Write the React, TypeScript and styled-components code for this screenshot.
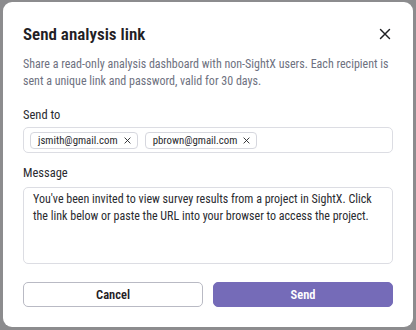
import React from "react";
import styled, { createGlobalStyle } from "styled-components";

const Global = createGlobalStyle`
  html, body { margin: 0; padding: 0; }
  body { background: #8c8c8e; font-family: "Roboto Condensed", "Roboto", sans-serif; }
  * { box-sizing: border-box; }
`;

const Backdrop = styled.div`
  width: 416px;
  height: 330px;
  padding: 2px 3px 3px 3px;
  background: #8c8c8e;
`;

const Modal = styled.div`
  height: 100%;
  background: #ffffff;
  border-radius: 9px;
  padding: 20px;
  display: flex;
  flex-direction: column;
`;

const Header = styled.div`
  display: flex;
  align-items: center;
  justify-content: space-between;
  height: 24px;
`;

const Title = styled.h1`
  margin: 0;
  font-size: 17px;
  font-weight: 600;
  color: #1f2024;
`;

const CloseButton = styled.button`
  border: none;
  background: none;
  padding: 0;
  width: 16px;
  height: 16px;
  display: flex;
  align-items: center;
  justify-content: center;
  cursor: pointer;
`;

const Description = styled.p`
  margin: 10px 0 0;
  font-size: 12px;
  line-height: 17px;
  color: #6e7180;
`;

const Label = styled.div<{ $top: number }>`
  font-size: 12.5px;
  color: #2a2b30;
  margin-top: ${(p) => p.$top}px;
  line-height: 16px;
`;

const TagBox = styled.div`
  margin-top: 4px;
  height: 26px;
  border: 1px solid #dcdde3;
  border-radius: 5px;
  display: flex;
  align-items: center;
  gap: 7px;
  padding: 0 6px;
`;

const Chip = styled.span`
  display: inline-flex;
  align-items: center;
  gap: 6px;
  height: 17px;
  padding: 0 6px 0 7px;
  border: 1px solid #d6d7de;
  border-radius: 4px;
  font-size: 10.8px;
  color: #2a2b30;
`;

const MessageBox = styled.div`
  margin-top: 6px;
  height: 77px;
  border: 1px solid #dcdde3;
  border-radius: 5px;
  padding: 3px 8px 3px 9px;
  font-size: 12px;
  line-height: 17px;
  color: #2a2b30;
`;

const Actions = styled.div`
  margin-top: auto;
  display: grid;
  grid-template-columns: 1fr 1fr;
  gap: 10px;
`;

const Button = styled.button<{ $primary?: boolean }>`
  height: 25px;
  border-radius: 5px;
  font-family: inherit;
  font-size: 12.5px;
  font-weight: 600;
  border: 1px solid ${(p) => (p.$primary ? "#756bb8" : "#b9bac4")};
  background: ${(p) => (p.$primary ? "#756bb8" : "#ffffff")};
  color: ${(p) => (p.$primary ? "#ffffff" : "#1f2024")};
`;

const X = ({ size, stroke }: { size: number; stroke: number }) => (
  <svg width={size} height={size} viewBox="0 0 16 16">
    <path d="M2 2 L14 14 M14 2 L2 14" stroke="#1f2024" strokeWidth={stroke} strokeLinecap="round" />
  </svg>
);

export default function App() {
  return (
    <>
      <Global />
      <Backdrop>
        <Modal>
          <Header>
            <Title>Send analysis link</Title>
            <CloseButton aria-label="Close">
              <X size={12} stroke={1.9} />
            </CloseButton>
          </Header>
          <Description>
            Share a read-only analysis dashboard with non-SightX users. Each recipient is sent a unique link and password, valid for 30 days.
          </Description>
          <Label $top={17}>Send to</Label>
          <TagBox>
            <Chip>
              jsmith@gmail.com <X size={7} stroke={2} />
            </Chip>
            <Chip>
              pbrown@gmail.com <X size={7} stroke={2} />
            </Chip>
          </TagBox>
          <Label $top={12}>Message</Label>
          <MessageBox>
            You've been invited to view survey results from a project in SightX. Click the link below or paste the URL into your browser to access the project.
          </MessageBox>
          <Actions>
            <Button>Cancel</Button>
            <Button $primary>Send</Button>
          </Actions>
        </Modal>
      </Backdrop>
    </>
  );
}
